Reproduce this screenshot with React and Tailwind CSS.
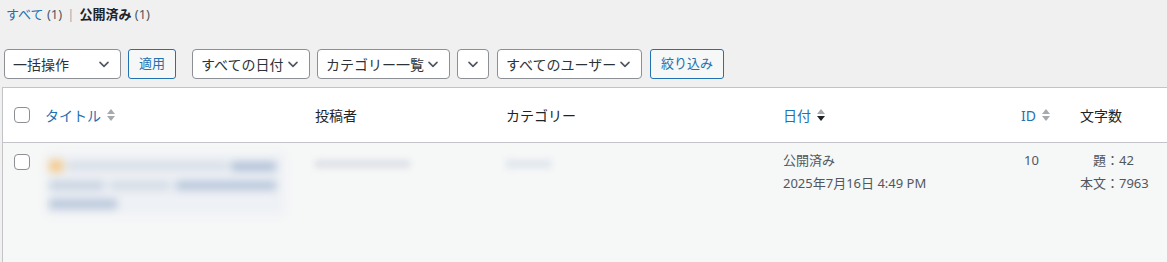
import React from 'react'

const font = { fontFamily: '"Noto Sans", "Noto Sans CJK JP", sans-serif' }

const Chevron = () => (
  <svg width="16" height="16" viewBox="0 0 20 20" className="shrink-0">
    <path d="M5 8l5 5 5-5" fill="none" stroke="#50575e" strokeWidth="2" strokeLinecap="round" strokeLinejoin="round" />
  </svg>
)

const Select = ({ label, width }) => (
  <div className={`flex items-center justify-between h-[30px] ${width} bg-white border border-[#8c8f94] rounded-[4px] pl-[8px] pr-[8px] text-[14px] text-[#2c3338]`}>
    <span>{label}</span>
    <Chevron />
  </div>
)

const Button = ({ label, width }) => (
  <div className={`flex items-center justify-center h-[30px] ${width} bg-[#f6f7f7] border border-[#2271b1] rounded-[3px] text-[13px] text-[#2271b1]`}>
    {label}
  </div>
)

const SortArrows = ({ active }) => (
  <svg width="10" height="16" viewBox="0 0 10 16" className="ml-[5px]">
    <path d="M1 7l4-5 4 5z" fill="#a7aaad" />
    <path d="M1 9l4 5 4-5z" fill={active ? '#1d2327' : '#a7aaad'} />
  </svg>
)

const Checkbox = () => (
  <div className="w-[16px] h-[16px] bg-white border border-[#8c8f94] rounded-[4px]" />
)

export default function App() {
  return (
    <div className="w-[1167px] h-[262px] overflow-hidden bg-[#f0f0f1]" style={font}>
      {/* status links */}
      <div className="pl-[6px] pt-[4px] h-[40px] text-[13px] leading-[20px] text-[#50575e]">
        <span className="text-[#2271b1]">すべて</span> (1)
        <span className="text-[#a7aaad] mx-[5px]">|</span>
        <span className="font-bold text-[#1d2327]">公開済み</span> (1)
      </div>

      {/* filters */}
      <div className="flex items-center h-[30px] mt-[9px] pl-[4px]">
        <Select label="一括操作" width="w-[117px]" />
        <div className="ml-[7px]"><Button label="適用" width="w-[48px]" /></div>
        <div className="ml-[16px]"><Select label="すべての日付" width="w-[118px]" /></div>
        <div className="ml-[7px]"><Select label="カテゴリー一覧" width="w-[133px]" /></div>
        <div className="ml-[7px] flex items-center justify-center h-[30px] w-[32px] bg-white border border-[#8c8f94] rounded-[4px]"><Chevron /></div>
        <div className="ml-[8px]"><Select label="すべてのユーザー" width="w-[145px]" /></div>
        <div className="ml-[8px]"><Button label="絞り込み" width="w-[74px]" /></div>
      </div>

      {/* table */}
      <div className="ml-[2px] mt-[8px] w-[1200px] border-l border-t border-[#c3c4c7]">
        <div className="flex items-center h-[55px] bg-white border-b border-[#c3c4c7] text-[14px] text-[#1d2327]">
          <div className="w-[42px] pl-[11px] flex"><Checkbox /></div>
          <div className="w-[270px] flex items-center text-[#2271b1]">タイトル<SortArrows /></div>
          <div className="w-[191px]">投稿者</div>
          <div className="w-[277px]">カテゴリー</div>
          <div className="w-[238px] flex items-center text-[#2271b1]">日付<SortArrows active /></div>
          <div className="w-[59px] flex items-center text-[#2271b1]">ID<SortArrows /></div>
          <div>文字数</div>
        </div>

        <div className="flex h-[140px] bg-[#f6f7f7] text-[13px] leading-[23px] text-[#50575e]">
          <div className="w-[42px] pl-[11px] pt-[11px]"><Checkbox /></div>
          <div className="w-[270px] pt-[10px] pl-[2px]">
            <div className="w-[238px] h-[62px] bg-[#eef1f5] blur-[4px] pt-[4px] pl-[2px]">
              <div className="flex items-center gap-[4px] h-[18px]">
                <div className="w-[14px] h-[12px] bg-[#f5c98a]" />
                <div className="w-[160px] h-[8px] bg-[#d6dde7]" />
                <div className="w-[45px] h-[9px] bg-[#aebfd6]" />
              </div>
              <div className="flex items-center gap-[6px] h-[20px]">
                <div className="w-[55px] h-[9px] bg-[#c6d1e0]" />
                <div className="w-[60px] h-[9px] bg-[#d3dbe6]" />
                <div className="w-[100px] h-[9px] bg-[#b5c4d9]" />
              </div>
              <div className="flex items-center h-[18px]">
                <div className="w-[68px] h-[10px] bg-[#b9c7db]" />
              </div>
            </div>
          </div>
          <div className="w-[191px] pt-[17px] blur-[3px]">
            <div className="w-[95px] h-[8px] bg-[#dde1e6]" />
          </div>
          <div className="w-[277px] pt-[17px] blur-[3px]">
            <div className="w-[45px] h-[8px] bg-[#dfe6ee]" />
          </div>
          <div className="w-[238px] pt-[6px]">
            <div>公開済み</div>
            <div>2025年7月16日 4:49 PM</div>
          </div>
          <div className="w-[59px] pt-[6px] pl-[3px]">10</div>
          <div className="pt-[6px]">
            <div className="pl-[13px]">題：42</div>
            <div>本文：7963</div>
          </div>
        </div>
      </div>
    </div>
  )
}
